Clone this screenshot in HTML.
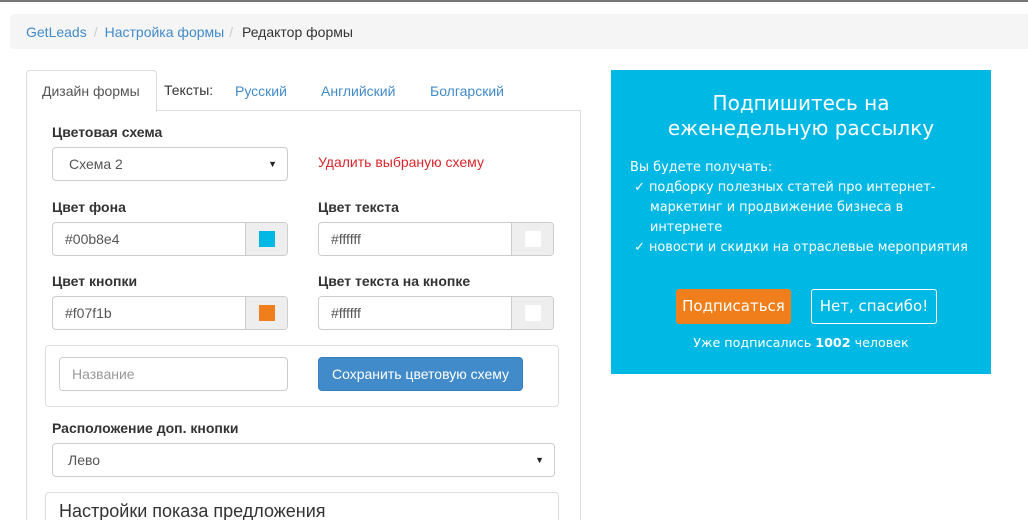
<!DOCTYPE html>
<html style="overflow:hidden;height:520px"><head><meta charset="utf-8"><style>
*{box-sizing:border-box;margin:0;padding:0}
body{width:1028px;height:520px;overflow:hidden;background:#fff;font-family:"Liberation Sans",sans-serif;font-size:14px;color:#333;position:relative}
.a{position:absolute}
.lbl{position:absolute;font-weight:bold;font-size:14px;color:#333}
.inp{position:absolute;height:34px;border:1px solid #ccc;border-radius:4px;background:#fff;padding:0 16px;line-height:32px;color:#555;font-size:14px}
.add{position:absolute;top:0;right:0;width:42px;height:32px;background:#eee;border-left:1px solid #ccc;border-radius:0 3px 3px 0}
.sw{position:absolute;left:13px;top:8px;width:16px;height:16px}
.arr{position:absolute;right:10px;top:0;font-size:9px;color:#222}
.bt{color:#fff;font-family:"DejaVu Sans","Liberation Sans",sans-serif}
</style></head><body>
<div class="a" style="left:0;top:0;width:1028px;height:2px;background:#777"></div>
<div class="a" style="left:10px;top:14px;width:1030px;height:35px;background:#f5f5f5;border-radius:4px"></div>
<div class="a" style="left:26px;top:23px;line-height:18px"><span style="color:#428bca">GetLeads</span><span style="color:#ccc;padding:0 7px">/</span><span style="color:#428bca">Настройка формы</span><span style="color:#ccc;padding:0 5px">/</span> Редактор формы</div>

<div class="a" style="left:26px;top:111px;width:555px;height:409px;border-left:1px solid #ddd;border-right:1px solid #ddd"></div>
<div class="a" style="left:157px;top:110px;width:424px;height:1px;background:#ddd"></div>
<div class="a" style="left:26px;top:70px;width:131px;height:42px;border:1px solid #ddd;border-bottom:none;border-radius:4px 4px 0 0;background:#fff;padding:12px 0 0 15px;color:#555">Дизайн формы</div>
<div class="a" style="left:164px;top:82px;color:#333">Тексты:</div>
<div class="a" style="left:235px;top:83px;color:#428bca">Русский</div>
<div class="a" style="left:321px;top:83px;color:#428bca">Английский</div>
<div class="a" style="left:430px;top:83px;color:#428bca">Болгарский</div>

<div class="lbl" style="left:52px;top:124px">Цветовая схема</div>
<div class="inp" style="left:52px;top:147px;width:236px">Схема 2<span class="arr">▼</span></div>
<div class="a" style="left:318px;top:154px;color:#d9262b">Удалить выбраную схему</div>

<div class="lbl" style="left:52px;top:199px">Цвет фона</div>
<div class="inp" style="left:52px;top:222px;width:236px;padding-left:12px">#00b8e4<div class="add"><div class="sw" style="background:#00b8e4"></div></div></div>
<div class="lbl" style="left:318px;top:199px">Цвет текста</div>
<div class="inp" style="left:318px;top:222px;width:236px;padding-left:12px">#ffffff<div class="add"><div class="sw" style="background:#fff"></div></div></div>

<div class="lbl" style="left:52px;top:273px">Цвет кнопки</div>
<div class="inp" style="left:52px;top:296px;width:236px;padding-left:12px">#f07f1b<div class="add"><div class="sw" style="background:#f07f1b"></div></div></div>
<div class="lbl" style="left:318px;top:273px">Цвет текста на кнопке</div>
<div class="inp" style="left:318px;top:296px;width:236px;padding-left:12px">#ffffff<div class="add"><div class="sw" style="background:#fff"></div></div></div>

<div class="a" style="left:45px;top:345px;width:514px;height:62px;border:1px solid #ddd;border-radius:4px"></div>
<div class="inp" style="left:59px;top:357px;width:229px;padding-left:12px;color:#999">Название</div>
<div class="a" style="left:318px;top:357px;width:205px;height:34px;background:#428bca;border:1px solid #357ebd;border-radius:4px;color:#fff;text-align:center;line-height:32px">Сохранить цветовую схему</div>

<div class="lbl" style="left:52px;top:420px">Расположение доп. кнопки</div>
<div class="inp" style="left:52px;top:443px;width:503px;padding-left:15px">Лево<span class="arr">▼</span></div>

<div class="a" style="left:45px;top:492px;width:514px;height:28px;border:1px solid #ddd;border-bottom:none;border-radius:4px 4px 0 0"></div>
<div class="a" style="left:59px;top:501px;font-size:18px;color:#333">Настройки показа предложения</div>

<div class="a" style="left:611px;top:70px;width:380px;height:304px;background:#00b8e4"></div>
<div class="a bt" style="left:611px;top:91px;width:380px;text-align:center;font-size:20px;line-height:25px">Подпишитесь на<br>еженедельную рассылку</div>
<div class="a bt" style="left:630px;top:158px;font-size:12.9px;line-height:20px;white-space:nowrap">Вы будете получать:<br>&nbsp;✓ подборку полезных статей про интернет-<br><span style="padding-left:20px">маркетинг и продвижение бизнеса в</span><br><span style="padding-left:20px">интернете</span><br>&nbsp;✓ новости и скидки на отраслевые мероприятия</div>
<div class="a bt" style="left:676px;top:289px;width:115px;height:35px;background:#f07f1b;border-radius:3px;text-align:center;line-height:35px;font-size:15px">Подписаться</div>
<div class="a bt" style="left:811px;top:289px;width:126px;height:35px;border:1px solid #fff;border-radius:3px;text-align:center;line-height:33px;font-size:15px">Нет, спасибо!</div>
<div class="a bt" style="left:611px;top:335px;width:380px;text-align:center;font-size:12.7px">Уже подписались <b>1002</b> человек</div>
</body></html>
